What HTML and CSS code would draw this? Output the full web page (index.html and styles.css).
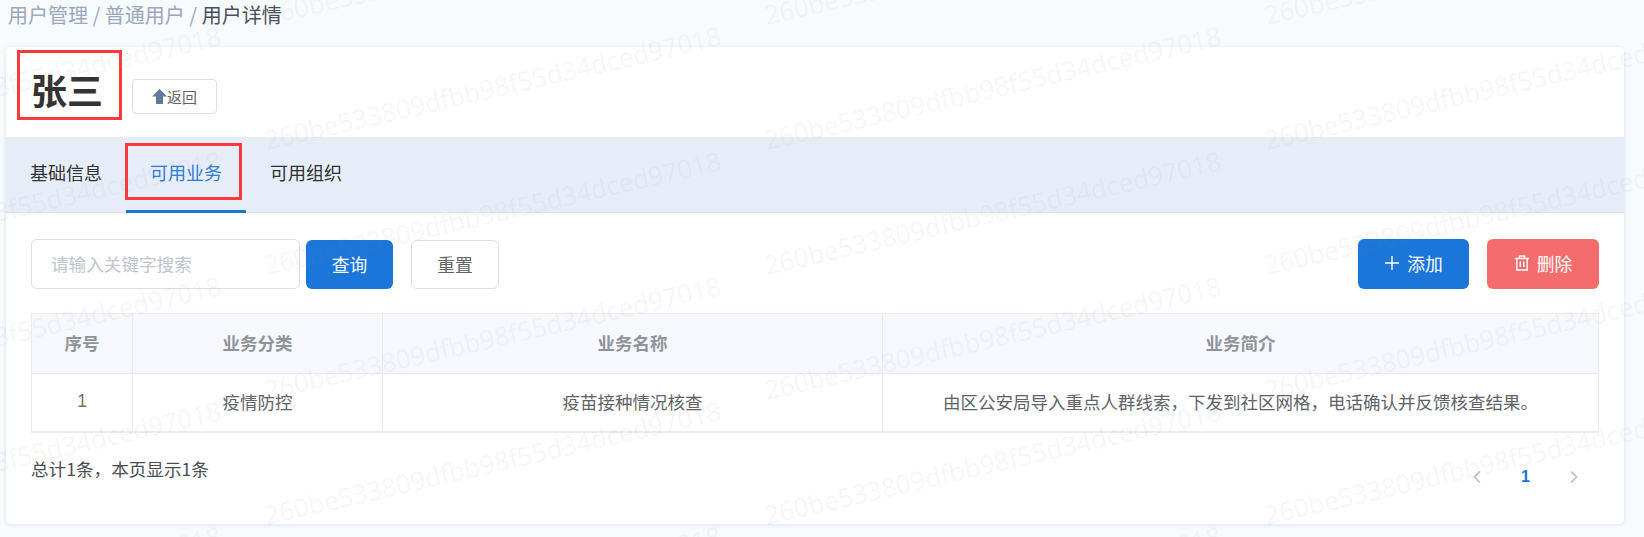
FILE: index.html
```html
<!DOCTYPE html>
<html lang="zh-CN">
<head>
<meta charset="utf-8">
<title>用户详情</title>
<link rel="stylesheet" href="styles.css">
</head>
<body>
<nav class="crumbs"><span class="crumb-link">用户管理</span><span class="crumb-sep">/</span><span class="crumb-link">普通用户</span><span class="crumb-sep">/</span><span class="crumb-current">用户详情</span></nav>
<main class="card">
  <header class="head">
    <h1 class="title">张三</h1>
    <button class="back"><svg class="back-icon" viewBox="0 0 15 15"><path d="M7.5 0 L15 7.5 H11 V15 H4 V7.5 H0 Z"/></svg>返回</button>
    <span class="mark mark-title"></span>
  </header>
  <div class="tabs">
    <div class="tab">基础信息</div>
    <div class="tab tab-active">可用业务<span class="mark mark-tab"></span></div>
    <div class="tab">可用组织</div>
  </div>
  <section class="body">
    <div class="toolbar">
      <div class="search">请输入关键字搜索</div>
      <button class="btn btn-primary btn-query">查询</button>
      <button class="btn btn-plain">重置</button>
      <div class="spacer"></div>
      <button class="btn btn-primary btn-add"><svg class="ico" viewBox="0 0 16 16"><path d="M8 1V15M1 8H15"/></svg>添加</button>
      <button class="btn btn-danger"><svg class="ico" viewBox="0 0 16 16"><path d="M1 3.5H15M5.5 3.5V1H10.5V3.5M2.8 3.5V15H13.2V3.5M6.3 6.5V12M9.7 6.5V12"/></svg>删除</button>
    </div>
    <table class="grid">
      <colgroup><col class="c1"><col class="c2"><col class="c3"><col class="c4"></colgroup>
      <thead><tr><th>序号</th><th>业务分类</th><th>业务名称</th><th>业务简介</th></tr></thead>
      <tbody><tr><td class="num">1</td><td>疫情防控</td><td>疫苗接种情况核查</td><td>由区公安局导入重点人群线索，下发到社区网格，电话确认并反馈核查结果。</td></tr></tbody>
    </table>
    <div class="foot">
      <div class="total">总计1条，本页显示1条</div>
      <div class="pager">
        <svg class="chev" viewBox="0 0 10 14"><path d="M8 1.5 2.5 7 8 12.5"/></svg>
        <span class="page">1</span>
        <svg class="chev" viewBox="0 0 10 14"><path d="M2 1.5 7.5 7 2 12.5"/></svg>
      </div>
    </div>
  </section>
</main>
<svg class="watermark" width="1644" height="537" aria-hidden="true">
  <defs>
    <pattern id="wm" x="-238" y="38" width="500" height="125" patternUnits="userSpaceOnUse">
      <text class="wm-text" x="5" y="112" transform="rotate(-13 5 112)">260be533809dfbb98f55d34dced97018</text>
      <text class="wm-text" x="5" y="237" transform="rotate(-13 5 237)">260be533809dfbb98f55d34dced97018</text>
    </pattern>
  </defs>
  <rect width="1644" height="537" fill="url(#wm)"/>
</svg>
</body>
</html>
```
FILE: styles.css
```css
* { box-sizing: border-box; }
html, body { margin: 0; height: 537px; overflow: hidden; }
body {
  position: relative;
  background: #f8fbfe;
  font-family: "Noto Sans CJK SC", "Noto Sans", sans-serif;
  color: #333;
}
.crumbs {
  height: 47px;
  padding: 0 0 17px 8px;
  display: flex;
  align-items: center;
  gap: 4.5px;
  font-size: 20px;
  line-height: 30px;
  color: #9aa7bd;
}
.crumb-current { color: #4a4f5a; }
.card {
  margin: 0 20px 0 6px;
  height: 477px;
  background: #fff;
  border-radius: 5px;
  box-shadow: 0 1px 5px rgba(90, 110, 150, .18);
  overflow: hidden;
}
.head {
  position: relative;
  height: 90px;
  display: flex;
  align-items: flex-start;
  padding-left: 25px;
}
.title {
  margin: 17px 0 0;
  font-size: 36px;
  line-height: 50px;
  font-weight: 700;
  color: #333;
}
.back {
  margin: 32px 0 0 29px;
  width: 85px;
  height: 35px;
  padding: 0;
  display: flex;
  align-items: center;
  justify-content: center;
  background: #fff;
  border: 1px solid #dcdfe6;
  border-radius: 4px;
  font: 15px "Noto Sans CJK SC", sans-serif;
  color: #606266;
}
.back-icon { width: 15px; height: 15px; fill: #64789f; }
.mark { position: absolute; border: 3px solid #f93a3a; pointer-events: none; }
.mark-title { left: 11px; top: 3px; width: 105px; height: 70px; }
.tabs {
  height: 76px;
  display: flex;
  background: #e7edf8;
  border-bottom: 1px solid #dfe4ee;
}
.tab {
  position: relative;
  padding: 0 24px 6px;
  height: 76px;
  width: 120px;
  display: flex;
  align-items: center;
  justify-content: center;
  font-size: 18px;
  color: #303133;
}
.tab-active { color: #2b7cd6; border-bottom: 3px solid #1a76d8; padding-bottom: 3px; }
.mark-tab { left: -1px; top: 6px; width: 117px; height: 57px; }
.body { padding: 26px 25px 0; }
.toolbar { display: flex; align-items: stretch; height: 50px; }
.search {
  width: 269px;
  border: 1px solid #dcdfe6;
  border-radius: 6px;
  padding: 0 0 2px 19px;
  display: flex;
  align-items: center;
  font-size: 17.6px;
  color: #c0c4cc;
}
.spacer { flex: 1; }
.btn {
  margin-top: 1px;
  display: flex;
  align-items: center;
  justify-content: center;
  padding: 0 0 2px;
  border: 1px solid transparent;
  border-radius: 6px;
  font: 17.8px "Noto Sans CJK SC", sans-serif;
  color: #fff;
}
.btn-primary { background: #1a76d8; }
.btn-query { width: 87px; margin-left: 6px; }
.btn-plain { width: 88px; margin-left: 18px; background: #fff; border-color: #dcdfe6; color: #606266; }
.btn-add { width: 111px; margin-top: 0; }
.btn-danger { width: 112px; margin-left: 18px; margin-top: 0; background: #f56c6c; }
.ico { width: 16px; height: 16px; margin-right: 7px; fill: none; stroke: #fff; stroke-width: 1.4; }
.grid {
  margin-top: 24px;
  width: 1568px;
  height: 120px;
  table-layout: fixed;
  border-collapse: collapse;
  font-size: 17.5px;
  color: #606266;
  border: 1px solid #e9ebf3;
  border-bottom-width: 2px;
}
.c1 { width: 101px; }
.c2 { width: 250px; }
.c3 { width: 500px; }
.grid th, .grid td { border: 1px solid #e9ebf3; padding: 0 0 2px; text-align: center; font-weight: 400; }
.grid th { height: 60px; background: #f7f8fe; font-weight: 700; color: #909399; }
.grid .num { color: #7f6a60; font-family: "Liberation Sans", sans-serif; }
.foot { display: flex; justify-content: space-between; margin-top: 21px; }
.total { font-size: 17.6px; line-height: 30px; color: #4a4d55; }
.pager { display: flex; align-items: center; height: 30px; margin: 8px 20px 0 0; }
.chev { width: 10px; height: 14px; fill: none; stroke: #b8c0cf; stroke-width: 1.7; }
.page { width: 87px; text-align: center; font: 700 16px "Liberation Sans", sans-serif; color: #1a76d8; }
.watermark { position: absolute; left: 0; top: 0; pointer-events: none; }
.wm-text { font-family: "Open Sans", sans-serif; font-size: 26px; fill: rgba(120, 130, 150, .075); }
```
